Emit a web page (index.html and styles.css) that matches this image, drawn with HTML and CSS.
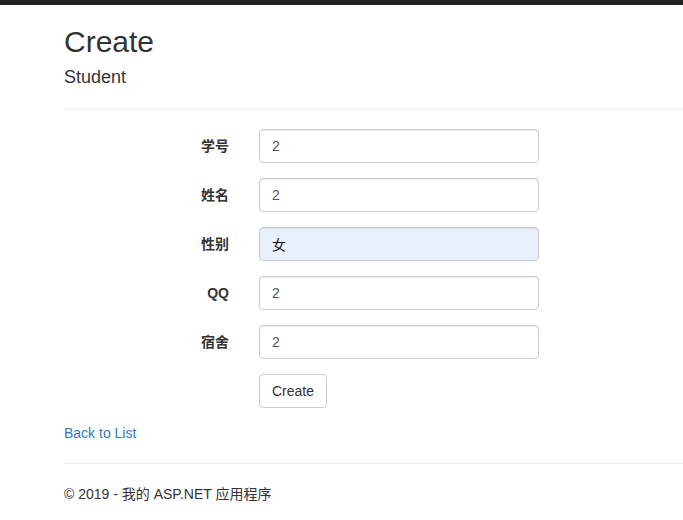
FILE: index.html
```html
<!DOCTYPE html>
<html lang="zh-CN">
<head>
<meta charset="utf-8">
<title>Create</title>
<link rel="stylesheet" href="styles.css">
</head>
<body>
<div class="topbar"></div>
<div class="body-content">
  <h2 class="title">Create</h2>
  <h4 class="subtitle">Student</h4>
  <hr class="rule">
  <form class="form">
    <div class="form-group">
      <label class="label">学号</label>
      <input class="input" type="text" value="2">
    </div>
    <div class="form-group">
      <label class="label">姓名</label>
      <input class="input" type="text" value="2">
    </div>
    <div class="form-group">
      <label class="label">性别</label>
      <input class="input input-autofill" type="text" value="女">
    </div>
    <div class="form-group">
      <label class="label">QQ</label>
      <input class="input" type="text" value="2">
    </div>
    <div class="form-group">
      <label class="label">宿舍</label>
      <input class="input" type="text" value="2">
    </div>
    <div class="form-group">
      <span class="label"></span>
      <div><button type="button" class="btn">Create</button></div>
    </div>
  </form>
  <div class="back"><a class="link" href="#">Back to List</a></div>
  <hr class="rule">
  <footer class="footer"><p class="footer-text">© 2019 - 我的 ASP.NET 应用程序</p></footer>
</div>
</body>
</html>
```
FILE: styles.css
```css
html, body {
  margin: 0;
  padding: 0;
  overflow: hidden;
}
body {
  font-family: "Liberation Sans", Arial, "Noto Sans CJK SC", sans-serif;
  font-size: 14px;
  line-height: 20px;
  color: #333;
  background: #fff;
}
.topbar {
  height: 5px;
  background: #222;
}
.body-content {
  padding-left: 64px;
}
.title {
  font-family: "Liberation Sans", Arial, "Noto Sans CJK SC", sans-serif;
  font-weight: 500;
  font-size: 30px;
  line-height: 33px;
  margin: 20px 0 10px;
  color: #333;
}
.subtitle {
  font-weight: 500;
  font-size: 18px;
  line-height: 19.8px;
  margin: 10px 0 19px;
  color: #333;
}
.rule {
  margin: 20px 0;
  border: 0;
  border-top: 1px solid #eee;
  height: 0;
}
.form {
  margin: 0;
}
.form-group {
  display: grid;
  grid-template-columns: 165px 280px;
  column-gap: 30px;
  align-items: center;
  margin-bottom: 15px;
}
.label {
  text-align: right;
  font-weight: bold;
  font-size: 14px;
  line-height: 20px;
  color: #333;
}
.input {
  box-sizing: border-box;
  display: block;
  width: 280px;
  height: 34px;
  padding: 6px 12px;
  font-family: "Liberation Sans", Arial, "Noto Sans CJK SC", sans-serif;
  font-size: 14px;
  line-height: 20px;
  color: #555;
  background: #fff;
  border: 1px solid #ccc;
  border-radius: 4px;
  box-shadow: inset 0 1px 1px rgba(0,0,0,.075);
  margin: 0;
}
.input-autofill {
  background: #e8f0fe;
  color: #111;
}
.btn {
  box-sizing: border-box;
  height: 34px;
  padding: 6px 12px;
  font-family: "Liberation Sans", Arial, sans-serif;
  font-size: 14px;
  line-height: 20px;
  color: #333;
  background: #fff;
  border: 1px solid #ccc;
  border-radius: 4px;
  margin: 0;
}
.back {
  line-height: 20px;
}
.link {
  color: #337ab7;
  text-decoration: none;
}
.footer-text {
  margin: 0 0 10px;
  line-height: 20px;
}
```
